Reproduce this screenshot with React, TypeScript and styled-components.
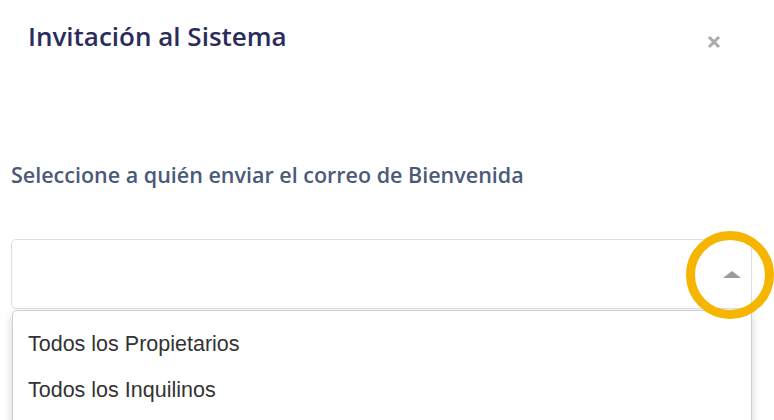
import React from "react";
import styled, { createGlobalStyle } from "styled-components";

const Global = createGlobalStyle`
  html, body { margin: 0; padding: 0; background: #fff; }
  body { font-family: "Open Sans", sans-serif; overflow: hidden; }
  * { box-sizing: border-box; }
`;

const Modal = styled.div`
  width: 774px;
  height: 420px;
  overflow: hidden;
  padding: 0 22px 0 11px;
  display: flex;
  flex-direction: column;
`;

const Header = styled.div`
  display: flex;
  justify-content: space-between;
  align-items: flex-start;
  padding: 18px 0 0 17px;
  height: 151px;
`;

const Title = styled.h1`
  margin: 0;
  font-family: "Open Sans", sans-serif;
  font-weight: 600;
  font-size: 26px;
  line-height: 36px;
  color: #2b2c5c;
`;

const Close = styled.button`
  border: 0;
  background: none;
  padding: 0;
  margin: 17px 31px 0 0;
  width: 14px;
  height: 14px;
  display: flex;
  cursor: pointer;
`;

const Label = styled.div`
  font-family: "Open Sans", sans-serif;
  font-weight: 600;
  font-size: 21.5px;
  line-height: 48px;
  color: #4b5a7a;
`;

const SelectWrap = styled.div`
  position: relative;
  margin-top: 40px;
  width: 741px;
`;

const SelectBox = styled.div`
  height: 70px;
  border: 1px solid #dcdfe4;
  border-radius: 5px;
  display: flex;
  align-items: center;
  justify-content: flex-end;
  padding-right: 10px;
`;

const Arrow = styled.span`
  width: 0;
  height: 0;
  border-left: 9.5px solid transparent;
  border-right: 9.5px solid transparent;
  border-bottom: 7px solid #9a9a9a;
`;

const Ring = styled.span`
  position: absolute;
  left: 675px;
  top: -8px;
  width: 88px;
  height: 88px;
  border: 9px solid #f6b500;
  border-radius: 50%;
  pointer-events: none;
  z-index: 2;
`;

const Menu = styled.ul`
  position: absolute;
  left: 1px;
  right: 0;
  top: 71px;
  height: 140px;
  margin: 0;
  padding: 10px 0 0 0;
  list-style: none;
  background: #fff;
  border: 1px solid #cfcfcf;
  border-radius: 5px 5px 0 0;
  box-shadow: 0 4px 10px rgba(0, 0, 0, 0.18);
`;

const Option = styled.li`
  font-family: "Liberation Sans", Arial, sans-serif;
  font-size: 21.5px;
  line-height: 46px;
  color: #333;
  padding-left: 15px;
`;

export default function App() {
  return (
    <>
      <Global />
      <Modal>
        <Header>
          <Title>Invitación al Sistema</Title>
          <Close aria-label="Cerrar">
            <svg width="14" height="14" viewBox="0 0 14 14">
              <path d="M2 2L12 12M12 2L2 12" stroke="#ababab" strokeWidth="3" strokeLinecap="butt" />
            </svg>
          </Close>
        </Header>
        <Label>Seleccione a quién enviar el correo de Bienvenida</Label>
        <SelectWrap>
          <SelectBox>
            <Arrow />
          </SelectBox>
          <Ring />
          <Menu>
            <Option>Todos los Propietarios</Option>
            <Option>Todos los Inquilinos</Option>
          </Menu>
        </SelectWrap>
      </Modal>
    </>
  );
}
